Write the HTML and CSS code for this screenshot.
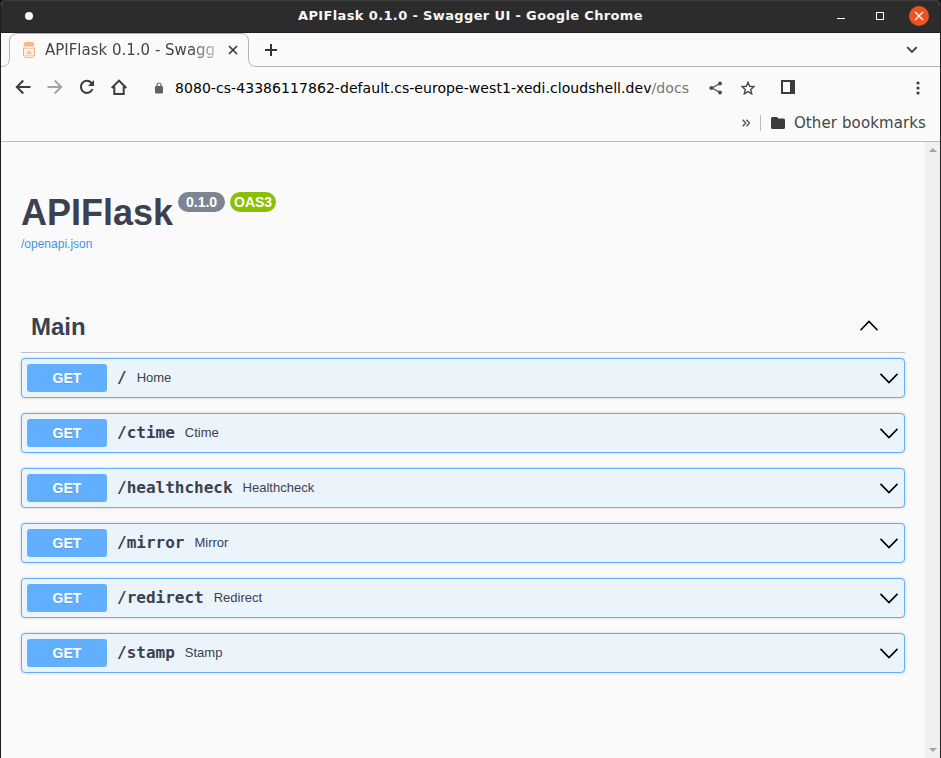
FILE: index.html
```html
<!DOCTYPE html>
<html lang="en">
<head>
<meta charset="utf-8">
<title>APIFlask 0.1.0 - Swagger UI</title>
<link rel="stylesheet" href="styles.css">
</head>
<body>
<div class="window">
  <header class="titlebar">
    <span class="dot"></span>
    <span class="window-title">APIFlask 0.1.0 - Swagger UI - Google Chrome</span>
    <div class="controls">
      <span class="minimize"></span>
      <span class="maximize"></span>
      <span class="close"><svg width="20" height="20" viewBox="0 0 20 20"><path d="M6 6l8 8M14 6l-8 8" stroke="#fff" stroke-width="1.3"/></svg></span>
    </div>
  </header>
  <div class="tabs">
    <svg class="tab-outline" width="939" height="34" viewBox="0 0 939 34"><path d="M0 33.5C5 33.5 8.500 31 8.500 25.500V8.500C8.500 3.500 11.500.5 16.500.5H240C245 .5 247.500 3.500 247.500 8.500V25.500C247.500 31 250.500 33.500 255.500 33.500H939" fill="none" stroke="#b1b1b1"/></svg>
    <svg class="favicon" width="12" height="16" viewBox="0 0 12 16" fill="none" stroke="#fca46a"><path d="M2.500.7h7a1 1 0 0 1 0 2.600h-7a1 1 0 0 1 0-2.600z" fill="#fcc39b" stroke="#fc9d5c"/><path d="M2.500 3.800C1 4.500.6 5.500.6 7v6c0 1.500.9 2.400 2.400 2.400h6c1.500 0 2.400-.9 2.400-2.400V7c0-1.500-.4-2.500-1.900-3.200z"/><path d="M1 6.300h10M1.500 13.200h9M3.500 11.200L6 8.500l2.500 2.700zM4.500 10.500h3" stroke-width=".7"/></svg>
    <span class="tab-name">APIFlask 0.1.0 - Swagg</span>
    <svg class="tab-close" width="10" height="10" viewBox="0 0 10 10"><path d="M1 1l8 8M9 1L1 9" stroke="#333" stroke-width="1.600"/></svg>
    <svg class="new-tab" width="12" height="12" viewBox="0 0 12 12"><path d="M6 0v12M0 6h12" stroke="#333" stroke-width="2"/></svg>
    <svg class="tab-search" width="12" height="8" viewBox="0 0 12 8"><path d="M1.200 1.200L6 6l4.800-4.800" fill="none" stroke="#3c3c3c" stroke-width="1.800"/></svg>
  </div>
  <nav class="toolbar">
    <svg class="nav-icon" width="16" height="16" viewBox="0 0 16 16"><path d="M15.500 8H2M8.300 1.500L1.800 8l6.500 6.500" fill="none" stroke="#3c3c3c" stroke-width="2"/></svg>
    <svg class="nav-icon" width="16" height="16" viewBox="0 0 16 16"><path d="M.5 8H14M7.700 1.500L14.200 8l-6.500 6.500" fill="none" stroke="#a3a3a3" stroke-width="2"/></svg>
    <svg class="nav-icon" width="16" height="16" viewBox="0 0 16 16"><path d="M13.500 10a6 6 0 1 1-1.200-6.200L14 5.500" fill="none" stroke="#3c3c3c" stroke-width="2"/><path d="M15 1v6H9z" fill="#3c3c3c"/></svg>
    <svg class="nav-icon" width="16" height="16" viewBox="0 0 16 16"><path d="M.7 9L8 1.600 15.300 9M3.300 7.500V15h9.400V7.500" fill="none" stroke="#3c3c3c" stroke-width="2"/></svg>
    <svg class="lock" width="8" height="12" viewBox="0 0 8 12"><path d="M2 5V3a2 2 0 0 1 4 0v2" fill="none" stroke="#5f6368" stroke-width="1.200"/><rect y="4" width="8" height="7.500" rx="1" fill="#5f6368"/></svg>
    <span class="url">8080-cs-43386117862-default.cs-europe-west1-xedi.cloudshell.dev<span class="url-path">/docs</span></span>
    <svg class="share" width="14" height="14" viewBox="0 0 14 14" fill="#4a4d51"><path d="M11 2.500L3 7l8 4.500" fill="none" stroke="#4a4d51" stroke-width="1.300"/><circle cx="11" cy="2.500" r="2"/><circle cx="2.300" cy="7" r="2"/><circle cx="11" cy="11.500" r="2"/></svg>
    <svg class="star" width="14" height="14" viewBox="0 0 14 14"><path d="M7 1.300l1.700 4 4.200.4-3.200 2.800 1 4.400L7 10.600l-3.700 2.300 1-4.400L1.100 5.700l4.200-.4z" fill="none" stroke="#4a4d51" stroke-width="1.400"/></svg>
    <svg class="side-panel" width="14" height="14" viewBox="0 0 14 14"><path d="M0 0h14v14H0zM2 2v10h7V2z" fill="#3c3c3c" fill-rule="evenodd"/></svg>
    <svg class="menu" width="4" height="14" viewBox="0 0 4 14" fill="#3c3c3c"><circle cx="2" cy="2" r="1.600"/><circle cx="2" cy="7" r="1.600"/><circle cx="2" cy="12" r="1.600"/></svg>
  </nav>
  <div class="bookmarks">
    <svg width="8" height="8" viewBox="0 0 8 8"><path d="M.7.8L3.700 4 .7 7.200M4.500.8L7.500 4l-3 3.200" fill="none" stroke="#55585e" stroke-width="1.500"/></svg>
    <span class="divider"></span>
    <svg class="folder" width="14" height="12" viewBox="0 0 14 12"><path d="M1.500 0H6l1.500 1.500h5A1.500 1.500 0 0 1 14 3v7.500a1.500 1.500 0 0 1-1.500 1.500h-11A1.500 1.500 0 0 1 0 10.500v-9A1.500 1.500 0 0 1 1.500 0z" fill="#3c3c3c"/></svg>
    <span class="bookmark-name">Other bookmarks</span>
  </div>
  <div class="viewport">
    <main class="page">
      <div class="heading"><h1>APIFlask</h1><span class="badge version">0.1.0</span><span class="badge oas">OAS3</span></div>
      <a class="spec">/openapi.json</a>
      <h2 class="tag"><span>Main</span><svg width="20" height="12" viewBox="0 0 20 12"><path d="M1.500 10.200L10 1.500l8.500 8.700" fill="none" stroke="#000" stroke-width="1.600"/></svg></h2>
      <div class="operations">
        <div class="operation"><span class="method">GET</span><span class="path">/</span><span class="summary">Home</span><svg width="20" height="12" viewBox="0 0 20 12"><path d="M1.500 1.900L10 10.600l8.500-8.700"/></svg></div>
        <div class="operation"><span class="method">GET</span><span class="path">/ctime</span><span class="summary">Ctime</span><svg width="20" height="12" viewBox="0 0 20 12"><path d="M1.500 1.900L10 10.600l8.500-8.700"/></svg></div>
        <div class="operation"><span class="method">GET</span><span class="path">/healthcheck</span><span class="summary">Healthcheck</span><svg width="20" height="12" viewBox="0 0 20 12"><path d="M1.500 1.900L10 10.600l8.500-8.700"/></svg></div>
        <div class="operation"><span class="method">GET</span><span class="path">/mirror</span><span class="summary">Mirror</span><svg width="20" height="12" viewBox="0 0 20 12"><path d="M1.500 1.900L10 10.600l8.500-8.700"/></svg></div>
        <div class="operation"><span class="method">GET</span><span class="path">/redirect</span><span class="summary">Redirect</span><svg width="20" height="12" viewBox="0 0 20 12"><path d="M1.500 1.900L10 10.600l8.500-8.700"/></svg></div>
        <div class="operation"><span class="method">GET</span><span class="path">/stamp</span><span class="summary">Stamp</span><svg width="20" height="12" viewBox="0 0 20 12"><path d="M1.500 1.900L10 10.600l8.500-8.700"/></svg></div>
      </div>
    </main>
    <div class="scrollbar"><span class="arrow-up"></span><span class="arrow-down"></span></div>
  </div>
</div>
</body>
</html>
```
FILE: styles.css
```css
* { box-sizing: border-box; }
body { margin: 0; background: #16151f; font-family: "DejaVu Sans", sans-serif; overflow: hidden; }
svg { display: block; flex: none; }
.window { height: 758px; display: flex; flex-direction: column; background: #fafafa; border: solid #1f1f1f; border-width: 0 1px; border-radius: 6px 6px 0 0; overflow: hidden; }
.titlebar { height: 33px; flex: none; display: grid; grid-template-columns: 120px 1fr 120px; align-items: center; background: #2c2c2c; border-top: 1px solid #3d3d3d; border-bottom: 1px solid #202020; padding-bottom: 1px; }
.dot { width: 8px; height: 8px; margin-left: 24px; border-radius: 50%; background: #f7f7f7; }
.window-title { margin-top: -1px; color: #f7f7f7; font-size: 13px; font-weight: bold; letter-spacing: .36px; text-align: center; white-space: nowrap; }
.controls { display: flex; align-items: center; justify-content: flex-end; padding-right: 11px; }
.minimize { width: 8px; height: 1px; margin: 5px 31px 0 0; background: #fff; }
.maximize { width: 8px; height: 8px; margin-right: 25px; border: 1px solid #fff; }
.close { width: 20px; height: 20px; border-radius: 50%; background: #e95420; }
.tabs { height: 34px; flex: none; position: relative; display: flex; align-items: center; padding-left: 22px; }
.tab-outline { position: absolute; left: 0; top: 0; }
.tab-name { width: 173px; margin-left: 10px; color: #454545; font-size: 15px; line-height: 20px; white-space: nowrap; -webkit-mask-image: linear-gradient(90deg, #000 145px, transparent 182px); mask-image: linear-gradient(90deg, #000 145px, transparent 182px); }
.tab-close { margin-left: 10px; }
.new-tab { margin-left: 27px; }
.tab-search { margin: 0 22px 0 auto; }
.toolbar { height: 42px; flex: none; display: flex; align-items: center; padding-left: 14px; }
.nav-icon { margin: 0 16px 2px 0; }
.lock { margin-left: 12px; }
.url { width: 518px; margin-left: 12px; color: #000; font-size: 14px; letter-spacing: .06px; white-space: nowrap; }
.url-path { color: #757575; }
.share { margin-left: 16px; }
.star { margin-left: 18px; }
.side-panel { margin: 0 0 2px 26px; }
.menu { margin: 0 20px 1px auto; }
.bookmarks { height: 33px; flex: none; display: flex; align-items: center; justify-content: flex-end; padding: 0 14px 5px 0; border-bottom: 1px solid #bdbdbd; }
.divider { width: 1px; height: 16px; margin: 0 10px; background: #bbb; }
.bookmark-name { margin-left: 9px; color: #454545; font-size: 15px; letter-spacing: .11px; line-height: 20px; }
.viewport { flex: 1; min-height: 0; display: flex; }
.page { flex: 1; padding: 50px 20px 0; color: #3b4151; font-family: "Liberation Sans", sans-serif; }
.heading { display: flex; align-items: flex-start; height: 44px; }
h1 { margin: 0; font-size: 36px; line-height: 41px; }
.badge { height: 20px; color: #fff; border-radius: 57px; font-size: 14px; font-weight: bold; line-height: 20px; text-align: center; }
.version { width: 47px; margin-left: 5px; background: #7d8492; }
.oas { width: 46px; margin-left: 5px; background: #89bf04; }
.spec { display: block; height: 64px; color: #4990e2; font-size: 12px; line-height: 16px; }
.tag { height: 53px; display: flex; align-items: center; justify-content: space-between; margin: 0 0 5px; padding: 0 26px 0 10px; border-bottom: 1px solid #c0c1c7; font-size: 24px; }
.tag span { padding-top: 2px; }
.operations { display: flex; flex-direction: column; gap: 15px; }
.operation { height: 40px; display: flex; align-items: center; padding: 0 5px; background: #ebf3fb; border: 1px solid #61affe; border-radius: 4px; box-shadow: 0 0 3px rgba(0,0,0,.19); }
.operation svg { margin-left: auto; fill: none; stroke: #000; stroke-width: 1.6; }
.method { width: 80px; height: 28px; border-radius: 3px; background: #61affe; color: #fff; font-size: 14px; font-weight: bold; line-height: 28px; text-align: center; text-shadow: 0 1px 0 rgba(0,0,0,.1); }
.path { margin-left: 10px; padding-bottom: 2px; font: bold 16px "DejaVu Sans Mono", monospace; }
.summary { margin-left: 10px; padding-bottom: 2px; font-size: 13px; }
.scrollbar { width: 15px; display: flex; flex-direction: column; align-items: center; justify-content: space-between; padding: 6px 0 6px; background: #f0f0f0; }
.arrow-up, .arrow-down { border: 4px solid transparent; }
.arrow-up { border-top: 0; border-bottom-color: #a3a3a3; }
.arrow-down { border-bottom: 0; border-top-color: #a3a3a3; }
```
